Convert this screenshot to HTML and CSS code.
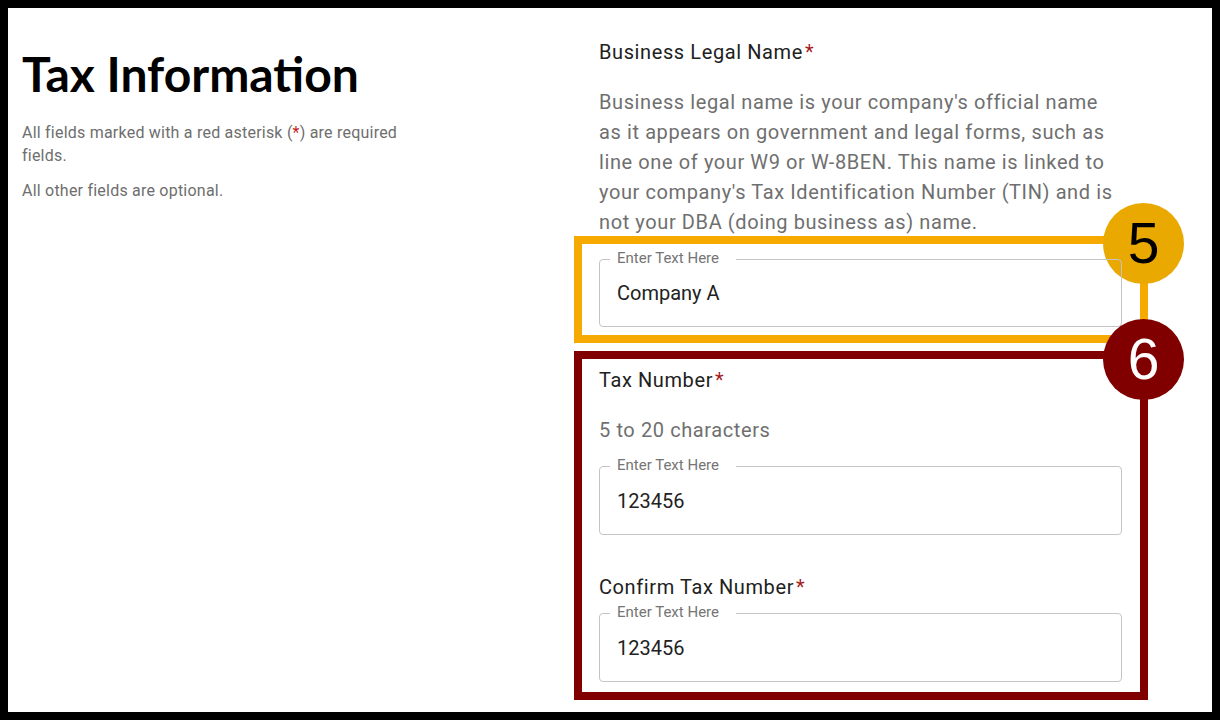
FILE: index.html
```html
<!DOCTYPE html>
<html lang="en">
<head>
<meta charset="utf-8">
<title>Tax Information</title>
<link rel="stylesheet" href="styles.css">
</head>
<body>
<div class="page">
  <aside class="intro">
    <h1 class="intro-title">Tax Information</h1>
    <p class="intro-text">All fields marked with a red asterisk (<span class="req-inline">*</span>) are required fields.</p>
    <p class="intro-text intro-text-last">All other fields are optional.</p>
  </aside>
  <main class="form">
    <div class="field-title">Business Legal Name<span class="req">*</span></div>
    <p class="field-desc">Business legal name is your company's official name as it appears on government and legal forms, such as line one of your W9 or W-8BEN. This name is linked to your company's Tax Identification Number (TIN) and is not your DBA (doing business as) name.</p>

    <div class="callout callout-gold">
      <span class="badge badge-gold">5</span>
      <div class="input">
        <span class="input-label">Enter Text Here</span>
        <span class="input-value">Company A</span>
      </div>
    </div>

    <div class="callout callout-red">
      <span class="badge badge-red">6</span>
      <div class="field-title">Tax Number<span class="req">*</span></div>
      <p class="field-hint">5 to 20 characters</p>
      <div class="input input-tax">
        <span class="input-label">Enter Text Here</span>
        <span class="input-value">123456</span>
      </div>
      <div class="field-title field-title-confirm">Confirm Tax Number<span class="req">*</span></div>
      <div class="input input-confirm">
        <span class="input-label">Enter Text Here</span>
        <span class="input-value">123456</span>
      </div>
    </div>
  </main>
</div>
</body>
</html>
```

FILE: styles.css
```css
* {
  box-sizing: border-box;
}

html, body {
  margin: 0;
  padding: 0;
}

body {
  background: #000;
  font-family: Roboto, "Liberation Sans", Arial, sans-serif;
}

.page {
  margin: 8px;
  height: 704px;
  background: #fff;
  display: flex;
  overflow: hidden;
}

.intro {
  flex: 0 0 591px;
  padding-left: 14px;
}

.intro-title {
  margin: 38px 0 0;
  font-family: Lato, "Noto Sans", sans-serif;
  font-weight: 700;
  font-size: 48px;
  line-height: 56px;
  color: #000;
}

.intro-text {
  width: 400px;
  margin: 19px 0 0;
  font-size: 16px;
  line-height: 23px;
  letter-spacing: 0.22px;
  color: #6e6e6e;
}

.intro-text-last {
  margin-top: 12px;
}

.req-inline {
  color: #c21d1d;
}

.form {
  flex: 0 0 523px;
  width: 523px;
  padding-top: 32px;
}

.field-title {
  font-size: 20px;
  line-height: 24px;
  letter-spacing: 0.6px;
  color: #212121;
}

.req {
  color: #a51d1d;
  margin-left: 2px;
}

.field-desc {
  margin: 23px 0 0;
  font-size: 20px;
  line-height: 30px;
  letter-spacing: 0.6px;
  color: #6f6f6f;
}

.field-hint {
  margin: 23px 0 0;
  font-size: 20px;
  line-height: 30px;
  letter-spacing: 0.6px;
  color: #6f6f6f;
}

.callout {
  position: relative;
  margin: -1px -26px 0 -25px;
  border: 8px solid #f6aa00;
  padding: 15px 18px 8px 17px;
}

.callout-red {
  margin-top: 8px;
  border-color: #800000;
  padding: 9px 18px 10px 17px;
}

.badge {
  position: absolute;
  top: -41px;
  right: -44px;
  width: 81px;
  height: 81px;
  border-radius: 50%;
  display: flex;
  align-items: center;
  justify-content: center;
  font-family: "Liberation Sans", Arial, sans-serif;
  font-size: 57px;
  line-height: 1;
}

.badge-gold {
  background: #eaa900;
  color: #000;
}

.badge-red {
  top: -40px;
  background: #800000;
  color: #fff;
}

.input {
  position: relative;
  height: 68px;
  border: 1px solid #c4c4c4;
  border-radius: 4px;
  display: flex;
  align-items: center;
  padding-left: 17px;
}

.input-tax {
  height: 69px;
  margin-top: 21px;
}

.input-confirm {
  height: 69px;
  margin-top: 14px;
}

.field-title-confirm {
  margin-top: 40px;
}

.input-label {
  position: absolute;
  top: -11px;
  left: 10px;
  padding: 0 17px 0 7px;
  background: #fff;
  font-size: 15px;
  line-height: 18px;
  color: #757575;
}

.input-value {
  font-size: 20px;
  color: #222;
}
```
